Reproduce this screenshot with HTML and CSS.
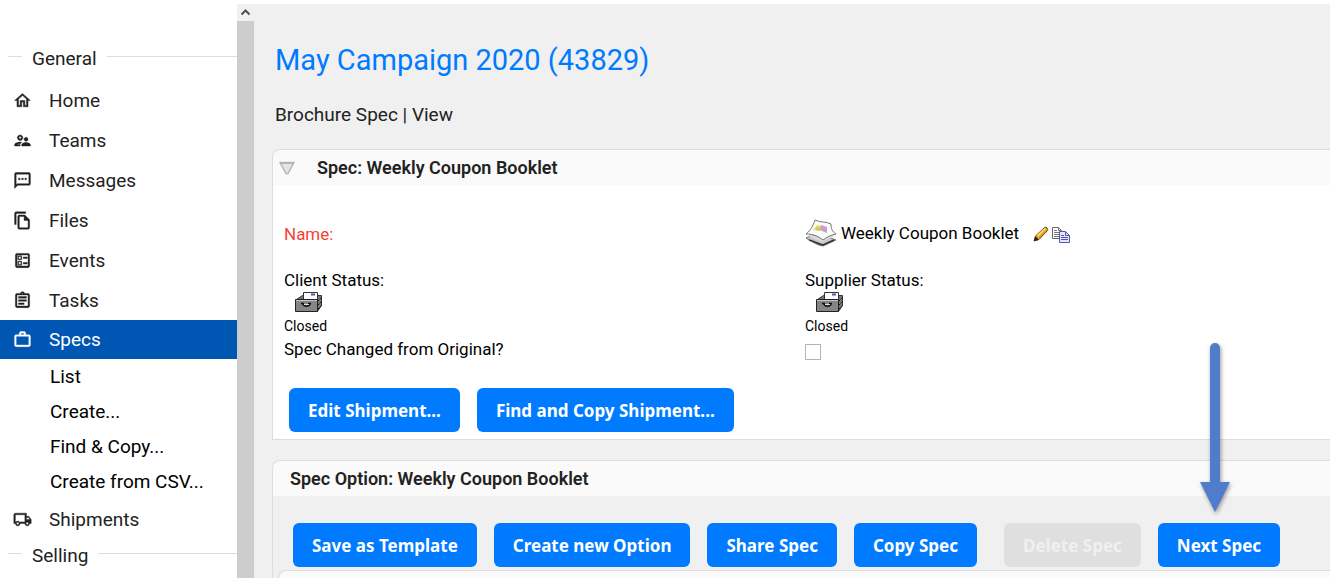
FILE: index.html
```html
<!DOCTYPE html>
<html lang="en">
<head>
    <meta charset="UTF-8">
    <meta name="viewport" content="width=device-width, initial-scale=1.0">
    <title>May Campaign 2020 (43829)</title>
    <link rel="stylesheet" href="styles.css">
</head>
<body>
    <div class="page">
        <nav class="sidebar">
            <h2 class="section">General</h2>
            <a class="item" href="#">
                <svg class="icon" viewBox="0 0 24 24"><path d="M12 5.690l5 4.500V18h-2v-6H9v6H7v-7.810l5-4.500M12 3L2 12h3v8h6v-6h2v6h6v-8h3L12 3z"/></svg>
                Home
            </a>
            <a class="item" href="#">
                <svg class="icon" viewBox="0 0 24 24"><path d="M9 12c1.930 0 3.500-1.570 3.500-3.500S10.930 5 9 5 5.500 6.570 5.500 8.500 7.070 12 9 12zm0-5c.83 0 1.500.67 1.500 1.500S9.830 10 9 10s-1.500-.67-1.500-1.500S8.170 7 9 7zm.05 10H4.770c.99-.5 2.700-1 4.230-1 .11 0 .23.010.34.010.34-.73.93-1.330 1.640-1.810C10.250 14.070 9.560 14 9 14c-2.340 0-7 1.170-7 3.500V19h7v-1.500c0-.17.020-.34.050-.5zm7.450-2.500c-1.840 0-5.500 1.010-5.500 3V19h11v-1.500c0-1.990-3.660-3-5.500-3zm1.210-1.820c.76-.43 1.290-1.240 1.290-2.180C19 9.120 17.880 8 16.500 8S14 9.120 14 10.500c0 .94.53 1.750 1.290 2.180.36.200.77.320 1.210.320s.85-.120 1.210-.320z"/></svg>
                Teams
            </a>
            <a class="item" href="#">
                <svg class="icon" viewBox="0 0 24 24"><path d="M20 2H4c-1.100 0-2 .9-2 2v18l4-4h14c1.100 0 2-.9 2-2V4c0-1.100-.9-2-2-2zm0 14H5.170L4 17.170V4h16v12zM7 9h2v2H7zm4 0h2v2h-2zm4 0h2v2h-2z"/></svg>
                Messages
            </a>
            <a class="item" href="#">
                <svg class="icon" viewBox="0 0 24 24"><path d="M16 1H4c-1.100 0-2 .9-2 2v14h2V3h12V1zm-1 4H8c-1.100 0-2 .9-2 2v14c0 1.100.9 2 2 2h11c1.100 0 2-.9 2-2V11l-6-6zM8 21V7h6v5h5v9H8z"/></svg>
                Files
            </a>
            <a class="item" href="#">
                <svg class="icon" viewBox="0 0 24 24"><path d="M13 7.500h5v2h-5zm0 7h5v2h-5zM19 3H5c-1.100 0-2 .9-2 2v14c0 1.100.9 2 2 2h14c1.100 0 2-.9 2-2V5c0-1.100-.9-2-2-2zm0 16H5V5h14v14zM11 6H6v5h5V6zm-1 4H7V7h3v3zm1 3H6v5h5v-5zm-1 4H7v-3h3v3z"/></svg>
                Events
            </a>
            <a class="item" href="#">
                <svg class="icon" viewBox="0 0 24 24"><path d="M7 15h7v2H7zm0-4h10v2H7zm0-4h10v2H7zm12-4h-4.180C14.400 1.840 13.300 1 12 1s-2.400.84-2.820 2H5c-1.100 0-2 .9-2 2v14c0 1.100.9 2 2 2h14c1.100 0 2-.9 2-2V5c0-1.100-.9-2-2-2zm-7-.25c.41 0 .75.34.75.75s-.34.75-.75.75-.75-.34-.75-.75.34-.75.75-.75zM19 19H5V5h14v14z"/></svg>
                Tasks
            </a>
            <a class="item active" href="#">
                <svg class="icon" viewBox="0 0 24 24"><path d="M14 6V4h-4v2h4zM4 8v11h16V8H4zm16-2c1.110 0 2 .89 2 2v11c0 1.110-.89 2-2 2H4c-1.110 0-2-.89-2-2V8c0-1.110.89-2 2-2h4V4c0-1.110.89-2 2-2h4c1.110 0 2 .89 2 2v2h4z"/></svg>
                Specs
            </a>
            <a class="subitem" href="#">List</a>
            <a class="subitem" href="#">Create...</a>
            <a class="subitem" href="#">Find &amp; Copy...</a>
            <a class="subitem" href="#">Create from CSV...</a>
            <a class="item" href="#">
                <svg class="icon" viewBox="0 0 24 24"><path d="M20 8h-3V4H3c-1.100 0-2 .9-2 2v11h2c0 1.660 1.340 3 3 3s3-1.340 3-3h6c0 1.660 1.340 3 3 3s3-1.340 3-3h2v-5l-3-4zM6 18.500c-.83 0-1.500-.67-1.500-1.500s.67-1.500 1.500-1.500 1.500.67 1.500 1.500-.67 1.500-1.500 1.500zM8.220 15c-.55-.61-1.330-1-2.220-1s-1.670.39-2.220 1H3V6h12v9H8.220zM18 18.500c-.83 0-1.500-.67-1.500-1.500s.67-1.500 1.500-1.500 1.500.67 1.500 1.500-.67 1.500-1.500 1.500zM17 12V9.500h2.500l1.960 2.500H17z"/></svg>
                Shipments
            </a>
            <h2 class="section">Selling</h2>
        </nav>

        <div class="scrollbar">
            <svg class="scroll-up" viewBox="0 0 17 17"><path d="M4.500 10.500l4-4 4 4" fill="none" stroke="#505050" stroke-width="2"/></svg>
            <div class="thumb"></div>
        </div>

        <main class="content">
            <h1 class="title">May Campaign 2020 (43829)</h1>
            <p class="subtitle">Brochure Spec | View</p>

            <section class="panel">
                <h3 class="panel-head">
                    <svg class="toggle" viewBox="0 0 16 14"><path d="M1 1.500h14L9 12.500H7z" fill="#e4e4e4" stroke="#b4b4b4" stroke-width="1.500" stroke-linejoin="round"/><path d="M1 2h14" stroke="#b4b4b4" stroke-width="2"/></svg>
                    Spec: Weekly Coupon Booklet
                </h3>
                <div class="panel-body">
                    <div class="fields">
                        <div class="name-label">Name:</div>
                        <div class="name-value">
                            <svg class="booklet" viewBox="0 0 32 28">
                                <path d="M1 19l12-5 18 7-13 6c-6-1-11-4-17-8z" fill="#c8c8c8" stroke="#777"/>
                                <path d="M4 21c5 1 9 4 14 5l11-5" fill="none" stroke="#333" stroke-width="1.500"/>
                                <path d="M4 16l13 6 12-6" fill="none" stroke="#ddd" stroke-width="2"/>
                                <path d="M10 1c6 3 10 1 16 4 0 5 1 7 5 10-5 1-9 3-13 6-5-4-10-6-17-6 5-4 7-8 9-14z" fill="#fbfbfb" stroke="#777"/>
                                <path d="M12 6l5 1-2 5-7-1z" fill="#f2d46a"/>
                                <path d="M16 6l6 2v6l-7-3z" fill="#c59ae8"/>
                                <path d="M12 8l4 1-1 3-4-1z" fill="#b5d45c"/>
                                <path d="M17 9l4 1-2 3z" fill="#f29a80"/>
                            </svg>
                            <span>Weekly Coupon Booklet</span>
                            <svg class="pencil" viewBox="0 0 16 16">
                                <path d="M1 15l1.500-5L11 2c1-1 2-1 3 0s1 2 0 3l-8 8.500z" fill="#e89b1c" stroke="#6b4210"/>
                                <path d="M4 9l7.500-7 1.500 1-8 8z" fill="#ffd768"/>
                                <path d="M1 15l1-4c2 0 3 1 3 3z" fill="#222"/>
                            </svg>
                            <svg class="copy" viewBox="0 0 18 16">
                                <path d="M.5.5h6l3 3v8h-9z" fill="#fff" stroke="#666"/>
                                <path d="M6.500.5v3h3M2 3.500h3M2 5.500h6M2 7.500h6M2 9.500h6" fill="none" stroke="#777"/>
                                <path d="M7.500 4.500h6l4 4v7h-10z" fill="#e4e6ff" stroke="#5355a8"/>
                                <path d="M13.500 4.500v4h4M9 8.500h3M9 10.500h7M9 12.500h7" fill="none" stroke="#5355a8"/>
                            </svg>
                        </div>

                        <div class="status">
                            <div>Client Status:</div>
                            <svg class="drawer" viewBox="0 0 28 22">
                                <path d="M1.500 8.500l6-4h19v10l-4 6z" fill="#777" stroke="#333"/>
                                <path d="M8.500 9V1.500h14V9" fill="#fff" stroke="#333"/>
                                <path d="M16 3.500h4" stroke="#4a50b8" stroke-width="2"/>
                                <path d="M.5 8.500h22v12H.5z" fill="#858585" stroke="#222"/>
                                <path d="M1 9.500h21" stroke="#c4c4c4"/>
                                <path d="M23 10l4-4M23 14l4-4M23 18l4-4" stroke="#111" stroke-dasharray="2 1"/>
                                <path d="M6 12.500h3M13 12.500h3M8 13c1 3 6 3 7 0" fill="none" stroke="#111" stroke-width="1.500"/>
                                <path d="M9 13.500h5" stroke="#ddd"/>
                            </svg>
                            <div class="state">Closed</div>
                        </div>
                        <div class="status">
                            <div>Supplier Status:</div>
                            <svg class="drawer" viewBox="0 0 28 22">
                                <path d="M1.500 8.500l6-4h19v10l-4 6z" fill="#777" stroke="#333"/>
                                <path d="M8.500 9V1.500h14V9" fill="#fff" stroke="#333"/>
                                <path d="M16 3.500h4" stroke="#4a50b8" stroke-width="2"/>
                                <path d="M.5 8.500h22v12H.5z" fill="#858585" stroke="#222"/>
                                <path d="M1 9.500h21" stroke="#c4c4c4"/>
                                <path d="M23 10l4-4M23 14l4-4M23 18l4-4" stroke="#111" stroke-dasharray="2 1"/>
                                <path d="M6 12.500h3M13 12.500h3M8 13c1 3 6 3 7 0" fill="none" stroke="#111" stroke-width="1.500"/>
                                <path d="M9 13.500h5" stroke="#ddd"/>
                            </svg>
                            <div class="state">Closed</div>
                        </div>

                        <label for="changed">Spec Changed from Original?</label>
                        <div class="check-cell"><input class="check" type="checkbox" id="changed"></div>
                    </div>
                    <div class="buttons">
                        <button class="btn">Edit Shipment...</button>
                        <button class="btn">Find and Copy Shipment...</button>
                    </div>
                </div>
            </section>

            <section class="panel option">
                <h3 class="panel-head">Spec Option: Weekly Coupon Booklet</h3>
                <div class="buttons">
                    <button class="btn">Save as Template</button>
                    <button class="btn">Create new Option</button>
                    <button class="btn">Share Spec</button>
                    <button class="btn">Copy Spec</button>
                    <button class="btn delete" disabled>Delete Spec</button>
                    <div class="next">
                        <button class="btn">Next Spec</button>
                        <svg class="arrow" viewBox="0 0 40 180">
                            <path d="M15 11a5 5 0 0 1 10 0v134h10L20 175 5 145h10z" fill="#4f7ccb"/>
                        </svg>
                    </div>
                </div>
                <div class="panel inner"></div>
            </section>
        </main>
    </div>
</body>
</html>
```

FILE: styles.css
```css
* {
    box-sizing: border-box;
}
body {
    margin: 0;
    font-family: Roboto, sans-serif;
    color: #000;
    background-color: #fff;
}
h1, h2, h3, p {
    margin: 0;
}
svg {
    display: block;
    flex-shrink: 0;
}
.page {
    display: flex;
    height: 100vh;
    padding-top: 4px;
    overflow: hidden;
}

/* Sidebar */
.sidebar {
    width: 237px;
    flex-shrink: 0;
    padding-top: 38px;
    font-size: 19px;
}
.section {
    display: flex;
    align-items: center;
    gap: 10px;
    height: 32px;
    padding-left: 8px;
    margin-bottom: 6px;
    font-size: 19px;
    font-weight: 400;
    color: #222;
}
.section::before,
.section::after {
    content: "";
    height: 1px;
    margin-bottom: 3px;
    background-color: #ddd;
}
.section::before {
    width: 14px;
}
.section::after {
    flex: 1;
}
.item {
    display: flex;
    align-items: center;
    gap: 17px;
    height: 40px;
    padding-left: 13px;
    color: #222;
    text-decoration: none;
}
.item.active {
    height: 39px;
    background-color: #0056b3;
    color: #fff;
}
.icon {
    width: 19px;
    height: 19px;
    fill: currentColor;
    stroke: currentColor;
    stroke-width: 0.5;
}
.subitem {
    display: block;
    padding-left: 50px;
    line-height: 35px;
    color: #000;
    text-decoration: none;
}

/* Scrollbar of the menu frame */
.scrollbar {
    display: flex;
    flex-direction: column;
    width: 17px;
    flex-shrink: 0;
    background-color: #f0f0f0;
}
.scroll-up {
    width: 17px;
    height: 17px;
}
.thumb {
    flex: 1;
    background-color: #cdcdcd;
}

/* Content */
.content {
    flex: 1;
    padding: 36px 0 0 18px;
    background-color: #f0f0f0;
    font-size: 17px;
}
.title {
    padding-left: 3px;
    font-size: 29px;
    font-weight: 400;
    line-height: 40px;
    color: #007bff;
}
.subtitle {
    padding-left: 3px;
    margin: 22px 0;
    font-size: 19px;
    line-height: 25px;
    color: #222;
}
.panel {
    margin-bottom: 20px;
    border: 1px solid #ddd;
    border-right: none;
    border-radius: 8px 0 0 0;
}
.panel-head {
    display: flex;
    align-items: center;
    gap: 22px;
    height: 35px;
    padding-left: 6px;
    border-radius: 7px 0 0 0;
    background-color: #fafafa;
    font-size: 18px;
    font-weight: 600;
    color: #222;
}
.option .panel-head {
    padding-left: 17px;
}
.toggle {
    width: 16px;
    height: 14px;
}
.panel-body {
    padding: 34px 4px 7px 11px;
    background-color: #fff;
}
.fields {
    display: grid;
    grid-template-columns: 1fr 1fr;
    line-height: 22px;
}
.name-label {
    padding-top: 4px;
    color: #f44336;
}
.name-value {
    display: flex;
    align-items: center;
    height: 28px;
    margin-bottom: 22px;
}
.booklet {
    width: 32px;
    height: 28px;
    margin-right: 4px;
}
.pencil {
    width: 16px;
    height: 16px;
    margin: 2px 3px 0 14px;
}
.copy {
    width: 18px;
    height: 16px;
    margin-top: 3px;
}
.drawer {
    width: 28px;
    height: 22px;
    margin-left: 11px;
}
.state {
    padding-top: 1px;
    font-size: 14px;
    line-height: 24px;
}
.check-cell {
    padding-top: 6px;
}
.check {
    display: block;
    appearance: none;
    width: 16px;
    height: 16px;
    margin: 0;
    border: 1px solid #b4b4b4;
    background-color: #fff;
}
.buttons {
    display: flex;
    gap: 17px;
}
.panel-body .buttons {
    padding: 28px 0 0 5px;
}
.btn {
    height: 44px;
    padding: 0 19px;
    border: none;
    border-radius: 6px;
    background-color: #007bff;
    color: #fff;
    font-family: "Noto Sans", sans-serif;
    font-size: 17px;
    font-weight: 700;
    white-space: nowrap;
    cursor: pointer;
}
.btn:disabled {
    background-color: #dfdfdf;
    color: #f0f0f0;
    cursor: default;
}
.delete {
    margin-left: 10px;
}
.option .buttons {
    padding: 27px 0 3px 20px;
}
.inner {
    height: 60px;
    margin: 0 0 0 5px;
    background-color: #fafafa;
}

/* Arrow that points at the Next Spec button */
.next {
    position: relative;
}
.arrow {
    position: absolute;
    left: 50%;
    bottom: 50px;
    width: 40px;
    height: 180px;
    margin-left: -24px;
    filter: drop-shadow(1px 2px 2px rgba(0, 0, 0, 0.4));
}
```
